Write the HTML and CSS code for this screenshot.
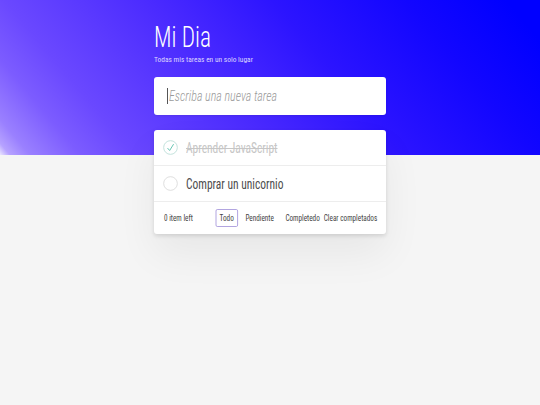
FILE: index.html
```html
<!DOCTYPE html>
<html lang="es">
<head>
<meta charset="utf-8">
<title>Mi Dia</title>
<link rel="stylesheet" href="styles.css">
</head>
<body>
<main class="app">
  <header class="header">
    <h1 class="title">Mi Dia</h1>
    <p class="subtitle">Todas mis tareas en un solo lugar</p>
    <div class="new-todo"><span class="caret"></span><span class="placeholder">Escriba una nueva tarea</span></div>
  </header>
  <section class="card">
    <ul class="list">
      <li class="item done">
        <svg class="toggle" viewBox="0 0 16 16" width="15" height="15"><circle cx="8" cy="8" r="7.3" fill="none" stroke="#bfe0da" stroke-width="1"/><path d="M4.8 8.6 L7.1 11.2 L11.3 4.4" fill="none" stroke="#5dc2af" stroke-width="1"/></svg>
        <span class="label">Aprender JavaScript</span>
      </li>
      <li class="item">
        <svg class="toggle" viewBox="0 0 16 16" width="15" height="15"><circle cx="8" cy="8" r="7.3" fill="none" stroke="#dcdcdc" stroke-width="1"/></svg>
        <span class="label">Comprar un unicornio</span>
      </li>
    </ul>
    <footer class="footer">
      <div class="footer-inner">
        <span class="count">0 item left</span>
        <ul class="filters">
          <li><a class="selected">Todo</a></li>
          <li><a>Pendiente</a></li>
          <li><a>Completedo</a></li>
        </ul>
        <span class="clear">Clear completados</span>
      </div>
    </footer>
  </section>
</main>
</body>
</html>
```
FILE: styles.css
```css
html, body {
  margin: 0;
  padding: 0;
}
body {
  font-family: Roboto, "Noto Sans", sans-serif;
  font-stretch: 75%;
  background-color: #f5f5f5;
  background-image: linear-gradient(50deg, #ebe6ff 0%, #b6a2ff 1.5%, #9a80ff 4.5%, #7c5cff 12%, #6a48ff 20%, #4a2aff 42%, #2c14ff 60%, #1206ff 80%, #0000ff 95%);
  background-size: 100% 155px;
  background-repeat: no-repeat;
  height: 405px;
  overflow: hidden;
}
.app {
  width: 232px;
  margin: 0 auto;
  padding-top: 20px;
}
.title {
  margin: 0;
  color: #fff;
  font-size: 30px;
  font-weight: 300;
  line-height: 34px;
  transform: scaleX(0.78);
  transform-origin: left center;
}
.subtitle {
  margin: 1px 0 0;
  color: #ddd6ff;
  font-size: 8px;
  line-height: 10px;
  transform: scaleX(0.93);
  transform-origin: left center;
}
.new-todo {
  margin-top: 12px;
  height: 38px;
  background: #fff;
  border-radius: 3px;
  box-shadow: 0 1px 2px rgba(0,0,0,0.08);
  display: flex;
  align-items: center;
  padding-left: 13px;
}
.caret {
  flex: none;
  width: 1px;
  height: 16px;
  background: #555;
}
.placeholder {
  font-style: italic;
  font-weight: 300;
  color: #9a9a9a;
  font-size: 15px;
  margin-left: 1px;
  transform: scaleX(0.8);
  transform-origin: left center;
}
.card {
  margin-top: 15px;
  background: #fff;
  border-radius: 3px;
  box-shadow: 0 2px 4px rgba(0,0,0,0.12), 0 20px 40px rgba(0,0,0,0.06);
}
.list {
  list-style: none;
  margin: 0;
  padding: 0;
}
.item {
  height: 36px;
  display: flex;
  align-items: center;
  padding-left: 9px;
  border-bottom: 1px solid #ededed;
  box-sizing: border-box;
}
.toggle {
  flex: none;
  margin-right: 8px;
}
.label {
  font-size: 15px;
  color: #4d4d4d;
  white-space: nowrap;
  transform: scaleX(0.765);
  transform-origin: left center;
}
.done .label {
  text-decoration: line-through;
  color: #c6c6c6;
}
.footer {
  height: 32px;
  display: flex;
  align-items: center;
  overflow: hidden;
}
.footer-inner {
  flex: none;
  width: 290px;
  box-sizing: border-box;
  padding: 0 12.5px;
  display: flex;
  align-items: center;
  font-size: 9px;
  color: #444;
  white-space: nowrap;
  transform: scaleX(0.8);
  transform-origin: left center;
}
.count {
  flex: none;
  width: 64.5px;
}
.filters {
  list-style: none;
  margin: 0;
  padding: 0;
  display: flex;
  gap: 4.5px;
}
.filters a {
  display: block;
  padding: 3px 4px;
  border: 1px solid transparent;
  border-radius: 2px;
}
.filters a.selected {
  border-color: #a99bdc;
}
.clear {
  margin-left: auto;
}
```
